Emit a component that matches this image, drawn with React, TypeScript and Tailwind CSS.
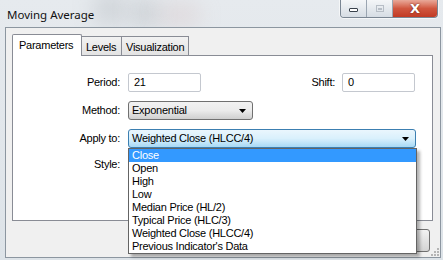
import React, { useState } from 'react';

const sans = { fontFamily: '"Liberation Sans", Arial, sans-serif' };

const options = [
  'Close',
  'Open',
  'High',
  'Low',
  'Median Price (HL/2)',
  'Typical Price (HLC/3)',
  'Weighted Close (HLCC/4)',
  "Previous Indicator's Data",
];

const tabs = [
  { name: 'Parameters', w: 'w-[70px]' },
  { name: 'Levels', w: 'w-[40px]' },
  { name: 'Visualization', w: 'w-[67px]' },
];

function Arrow() {
  return (
    <svg width="7" height="4" viewBox="0 0 7 4" className="block">
      <path d="M0 0H7L3.5 4Z" fill="#000" />
    </svg>
  );
}

export default function App() {
  const [tab] = useState('Parameters');
  const [selected] = useState(0);

  return (
    <div
      className="relative w-[443px] h-[260px] overflow-hidden bg-gradient-to-b from-[#e6eaee] to-[#dde3e8] text-[11px] tracking-[-0.25px] text-black"
      style={sans}
    >
      {/* blurred desktop behind the glass */}
      <div className="absolute left-[95px] top-[-6px] w-[30px] h-[30px] rounded-full bg-[#9aa0a6] opacity-40 blur-md" />
      <div className="absolute left-[135px] top-[0px] w-[20px] h-[26px] rounded-full bg-[#7d848a] opacity-40 blur-md" />
      <div className="absolute left-[160px] top-[8px] w-[40px] h-[14px] rounded-full bg-[#c9a3a3] opacity-40 blur-md" />

      {/* Title bar */}
      <div className="relative flex h-[27px]">
        <div className="pl-[7px] pt-[6px] text-[11.5px] tracking-normal text-[#111]" style={{ fontFamily: '"Noto Sans", "Open Sans", sans-serif' }}>
          Moving Average
        </div>
        <div className="ml-auto mr-[5px] flex h-[18px] rounded-b-[4px] border border-t-0 border-[#7a8693] overflow-hidden shadow-[0_0_0_1px_rgba(255,255,255,0.6)]">
          <div className="w-[26px] flex items-center justify-center bg-gradient-to-b from-[#f4f6f8] to-[#d6dde4] border-r border-[#9aa5b1]">
            <div className="w-[9px] h-[4px] mt-[3px] border border-[#39424c] bg-white rounded-[1px]" />
          </div>
          <div className="w-[26px] flex items-center justify-center bg-gradient-to-b from-[#f4f6f8] to-[#d6dde4] border-r border-[#9aa5b1]">
            <div className="w-[8px] h-[7px] border border-[#b7bec6] flex items-center justify-center">
              <div className="w-[4px] h-[2px] bg-[#b7bec6]" />
            </div>
          </div>
          <div className="w-[44px] flex items-center justify-center bg-gradient-to-b from-[#e8a899] via-[#d0563f] to-[#c13a24]">
            <span className="text-white font-bold text-[13px] leading-none [text-shadow:0_0_2px_#5a1a10]" style={{ fontFamily: '"DejaVu Sans", sans-serif' }}>
              X
            </span>
          </div>
        </div>
      </div>

      {/* Client area */}
      <div className="relative ml-[5px] mr-[2px] h-[231px] border border-[#8c96a0] bg-[#f0f0f0]">
        {/* tabs */}
        <div className="flex items-end ml-[6px] mt-[5px] h-[22px]">
          {tabs.map((t) =>
            t.name === tab ? (
              <div
                key={t.name}
                className={'relative z-10 h-[22px] pl-[6px] pt-[2px] border border-b-0 border-[#898c95] bg-white rounded-t-[2px] mb-[-1px] ' + t.w}
              >
                {t.name}
              </div>
            ) : (
              <div
                key={t.name}
                className={'h-[19px] pl-[4px] pt-[2px] border border-b-0 border-l-0 border-[#898c95] bg-gradient-to-b from-[#f2f2f2] to-[#e3e3e3] ' + t.w}
              >
                {t.name}
              </div>
            )
          )}
        </div>

        {/* panel */}
        <div className="ml-[6px] mr-[7px] h-[166px] border border-[#898c95] bg-white">
          <div className="flex items-center h-[19px] mt-[17px]">
            <div className="w-[115px] text-right pr-[8px]">Period:</div>
            <div className="w-[73px] h-[19px] border border-[#c4c8cf] rounded-[2px] pl-[5px] flex items-center">21</div>
            <div className="w-[141px] text-right pr-[7px]">Shift:</div>
            <div className="w-[73px] h-[19px] border border-[#c4c8cf] rounded-[2px] pl-[5px] flex items-center">0</div>
          </div>

          <div className="flex items-center h-[19px] mt-[9px]">
            <div className="w-[115px] text-right pr-[8px]">Method:</div>
            <div className="w-[125px] h-[19px] border border-[#707070] rounded-[3px] bg-gradient-to-b from-[#f2f2f2] via-[#ebebeb] to-[#cfcfcf] pl-[3px] pr-[6px] flex items-center justify-between">
              <span>Exponential</span>
              <Arrow />
            </div>
          </div>

          <div className="flex items-center h-[19px] mt-[9px]">
            <div className="w-[115px] text-right pr-[8px]">Apply to:</div>
            <div className="w-[288px] h-[19px] border border-[#3c7fb1] rounded-[3px] bg-gradient-to-b from-[#eaf6fd] via-[#d9f0fc] to-[#a7d9f5] pl-[3px] pr-[6px] flex items-center justify-between">
              <span>Weighted Close (HLCC/4)</span>
              <Arrow />
            </div>
          </div>

          <div className="flex items-center h-[19px] mt-[7px]">
            <div className="w-[115px] text-right pr-[8px]">Style:</div>
          </div>
        </div>

        {/* bottom button, mostly hidden */}
        <div className="flex justify-end mt-[8px] mr-[10px]">
          <div className="w-[76px] h-[23px] border border-[#707070] rounded-[3px] bg-gradient-to-b from-[#f2f2f2] to-[#d4d4d4]" />
        </div>

        {/* size grip */}
        <svg width="8" height="8" viewBox="0 0 8 8" className="absolute right-[1px] bottom-[1px]">
          {[[6, 0], [6, 3], [3, 3], [6, 6], [3, 6], [0, 6]].map(([x, y], i) => (
            <rect key={i} x={x} y={y} width="2" height="2" fill="#b5b5b5" />
          ))}
        </svg>
      </div>

      {/* open drop-down list */}
      <div className="absolute left-[128px] top-[148px] w-[289px] border border-[#646464] bg-white shadow-[3px_3px_3px_rgba(0,0,0,0.3)]">
        {options.map((o, i) => (
          <div
            key={o}
            className={
              'h-[13px] leading-[13px] pl-[3px] ' + (i === selected ? 'bg-[#3399ff] text-white' : 'text-black')
            }
          >
            {o}
          </div>
        ))}
      </div>
    </div>
  );
}
